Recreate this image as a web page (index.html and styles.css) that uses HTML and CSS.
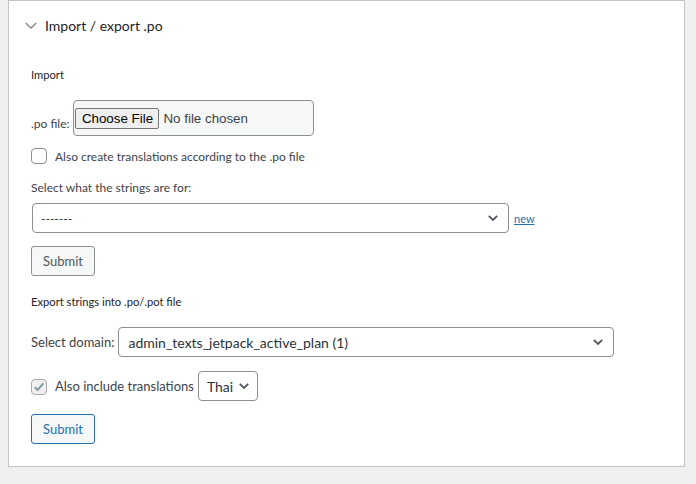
FILE: index.html
```html
<!DOCTYPE html>
<html lang="en">
<head>
<meta charset="utf-8">
<title>Import / export .po</title>
<link rel="stylesheet" href="styles.css">
</head>
<body>
<div class="postbox">
  <div class="postbox-header">
    <svg class="toggle" width="12" height="8" viewBox="0 0 12 8"><path d="M0.8 1 L6 6.2 L11.2 1" fill="none" stroke="#787c82" stroke-width="1.2"/></svg>
    <h2 class="postbox-title">Import / export .po</h2>
  </div>
  <div class="inside">
    <h4 class="section-title sec-import">Import</h4>

    <div class="file-row">
      <span class="label">.po file:</span>
      <div class="file-box">
        <span class="file-btn">Choose File</span>
        <span class="file-name">No file chosen</span>
      </div>
    </div>

    <div class="check-row row-create">
      <span class="checkbox"></span>
      <span class="check-label">Also create translations according to the .po file</span>
    </div>

    <div class="label-line">Select what the strings are for:</div>

    <div class="select-row">
      <div class="select select-context">
        <span class="select-text">-------</span>
        <svg class="arrow" width="10" height="6" viewBox="0 0 10 6"><path d="M0.8 0.8 L5 5 L9.2 0.8" fill="none" stroke="#50575e" stroke-width="1.8"/></svg>
      </div>
      <a class="new-link" href="#">new</a>
    </div>

    <div class="button btn-import">Submit</div>

    <h4 class="section-title sec-export">Export strings into .po/.pot file</h4>

    <div class="domain-row">
      <span class="label-lg">Select domain:</span>
      <div class="select select-domain">
        <span class="select-text select-text-lg">admin_texts_jetpack_active_plan (1)</span>
        <svg class="arrow" width="10" height="6" viewBox="0 0 10 6"><path d="M0.8 0.8 L5 5 L9.2 0.8" fill="none" stroke="#50575e" stroke-width="1.8"/></svg>
      </div>
    </div>

    <div class="include-row">
      <span class="checkbox checked">
        <svg width="14" height="14" viewBox="0 0 14 14"><path d="M2.8 7.2 L5.6 10 L11.4 3.4" fill="none" stroke="#7f9aa3" stroke-width="2"/></svg>
      </span>
      <span class="label-lg">Also include translations</span>
      <div class="select select-lang">
        <span class="select-text select-text-lg">Thai</span>
        <svg class="arrow" width="10" height="6" viewBox="0 0 10 6"><path d="M0.8 0.8 L5 5 L9.2 0.8" fill="none" stroke="#50575e" stroke-width="1.8"/></svg>
      </div>
    </div>

    <div class="button btn-export">Submit</div>
  </div>
</div>
</body>
</html>
```
FILE: styles.css
```css
* { box-sizing: border-box; }
html, body { margin: 0; padding: 0; }
body {
  background: #f0f0f1;
  font-family: Lato, "Open Sans", sans-serif;
  color: #3c434a;
  width: 696px;
  height: 484px;
  overflow: hidden;
}
.postbox {
  margin: 0 11px 0 8px;
  background: #fff;
  border: 1px solid #c3c4c7;
}
.postbox-header {
  display: flex;
  align-items: center;
  height: 50px;
  padding-left: 16px;
}
.toggle { display: block; margin-right: 8px; margin-top: -1px; }
.postbox-title {
  margin: 0;
  font-size: 14px;
  font-weight: 400;
  color: #1d2327;
  line-height: 20px;
}
.inside { padding: 0 22px 22px 22px; }
.section-title {
  margin: 0;
  font-size: 11.2px;
  font-weight: 400;
  line-height: 16px;
  color: #1d2327;
}
.sec-import { margin-top: 16px; }
.sec-export { margin-top: 18px; }

.file-row {
  display: flex;
  align-items: flex-end;
  margin-top: 17px;
  height: 36px;
}
.label { font-size: 12px; line-height: 16px; margin-right: 4px; margin-bottom: 4px; }
.file-box {
  width: 241px;
  height: 36px;
  background: #f6f7f7;
  border: 1px solid #8c8f94;
  border-radius: 4px;
  padding: 7px 0 0 1px;
  display: flex;
  align-items: flex-start;
  font-family: "Liberation Sans", Arial, sans-serif;
  font-size: 13.33px;
}
.file-btn {
  display: block;
  height: 21px;
  width: 84px;
  background: #efefef;
  border: 1px solid #767676;
  border-radius: 2px;
  color: #000;
  text-align: center;
  line-height: 19px;
}
.file-name { margin-left: 4px; line-height: 21px; color: #3c434a; }

.check-row {
  display: flex;
  align-items: center;
  height: 20px;
  margin-top: 10px;
}
.checkbox {
  display: flex;
  align-items: center;
  justify-content: center;
  width: 16px;
  height: 16px;
  border: 1px solid #8c8f94;
  border-radius: 4px;
  background: #fff;
  margin-right: 8px;
  flex: none;
}
.checkbox.checked {
  background: #f0f0f1;
  border-color: #a7aaad;
}
.check-label { font-size: 12px; }

.label-line { font-size: 12px; line-height: 18px; margin-top: 13px; }

.select-row {
  display: flex;
  align-items: center;
  margin-top: 6px;
  height: 30px;
}
.select {
  display: flex;
  align-items: center;
  justify-content: space-between;
  height: 30px;
  border: 1px solid #8c8f94;
  border-radius: 4px;
  background: #fff;
  padding: 0 10px 0 8px;
  flex: none;
}
.select-context { width: 477px; margin-left: 1px; }
.select-text { font-size: 12px; color: #2c3338; }
.select-text-lg { font-size: 14px; }
.arrow { display: block; }
.new-link {
  margin-left: 5px;
  font-size: 11px;
  color: #2271b1;
  text-decoration: underline;
}

.button {
  width: 64px;
  height: 30px;
  border: 1px solid #8c8f94;
  border-radius: 3px;
  background: #f6f7f7;
  color: #50575e;
  font-size: 13px;
  line-height: 28px;
  text-align: center;
}
.btn-import { margin-top: 13px; }
.btn-export { margin-top: 13px; border-color: #2271b1; color: #2271b1; }

.domain-row {
  display: flex;
  align-items: center;
  margin-top: 17px;
  height: 30px;
}
.label-lg { font-size: 13px; color: #3c434a; margin-right: 4px; }
.select-domain { width: 496px; padding-left: 9px; }

.include-row {
  display: flex;
  align-items: center;
  margin-top: 14px;
  height: 30px;
}
.include-row .checkbox { margin-top: 2px; }
.select-lang { width: 60px; padding: 0 8px; }
```
